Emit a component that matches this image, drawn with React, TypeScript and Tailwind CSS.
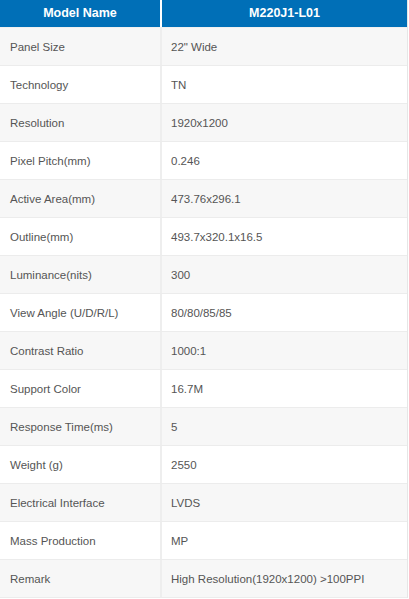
import React from "react";

const rows: [string, string][] = [
  ["Panel Size", '22" Wide'],
  ["Technology", "TN"],
  ["Resolution", "1920x1200"],
  ["Pixel Pitch(mm)", "0.246"],
  ["Active Area(mm)", "473.76x296.1"],
  ["Outline(mm)", "493.7x320.1x16.5"],
  ["Luminance(nits)", "300"],
  ["View Angle (U/D/R/L)", "80/80/85/85"],
  ["Contrast Ratio", "1000:1"],
  ["Support Color", "16.7M"],
  ["Response Time(ms)", "5"],
  ["Weight (g)", "2550"],
  ["Electrical Interface", "LVDS"],
  ["Mass Production", "MP"],
  ["Remark", "High Resolution(1920x1200) >100PPI"],
];

export default function App() {
  return (
    <div
      className="w-[409px] h-[599px] bg-white overflow-hidden"
      style={{ fontFamily: '"Liberation Sans", Arial, sans-serif' }}
    >
      <div className="w-[408px] flex flex-col border-r border-[#e6e6e6]">
        <div className="flex h-[28px] border-b border-[#f0f0f0] bg-white">
          <div className="w-[160px] h-[27px] bg-[#006fb7] text-white font-bold text-[12.5px] flex items-center justify-center">
            Model Name
          </div>
          <div className="w-[2px]" />
          <div className="flex-1 h-[27px] bg-[#006fb7] text-white font-bold text-[12.5px] flex items-center justify-center">
            M220J1-L01
          </div>
        </div>
        {rows.map(([k, v], i) => (
          <div
            key={k}
            className={`flex h-[38px] border-b border-[#ececec] ${
              i % 2 === 0 ? "bg-[#f7f7f7]" : "bg-white"
            }`}
          >
            <div className="w-[160px] pl-[10px] pt-[2px] flex items-center text-[11.5px] text-[#555]">
              {k}
            </div>
            <div className="w-[2px] bg-[#eeeeee]" />
            <div className="flex-1 pl-[9px] pt-[2px] flex items-center text-[11.5px] text-[#555]">
              {v}
            </div>
          </div>
        ))}
      </div>
    </div>
  );
}
